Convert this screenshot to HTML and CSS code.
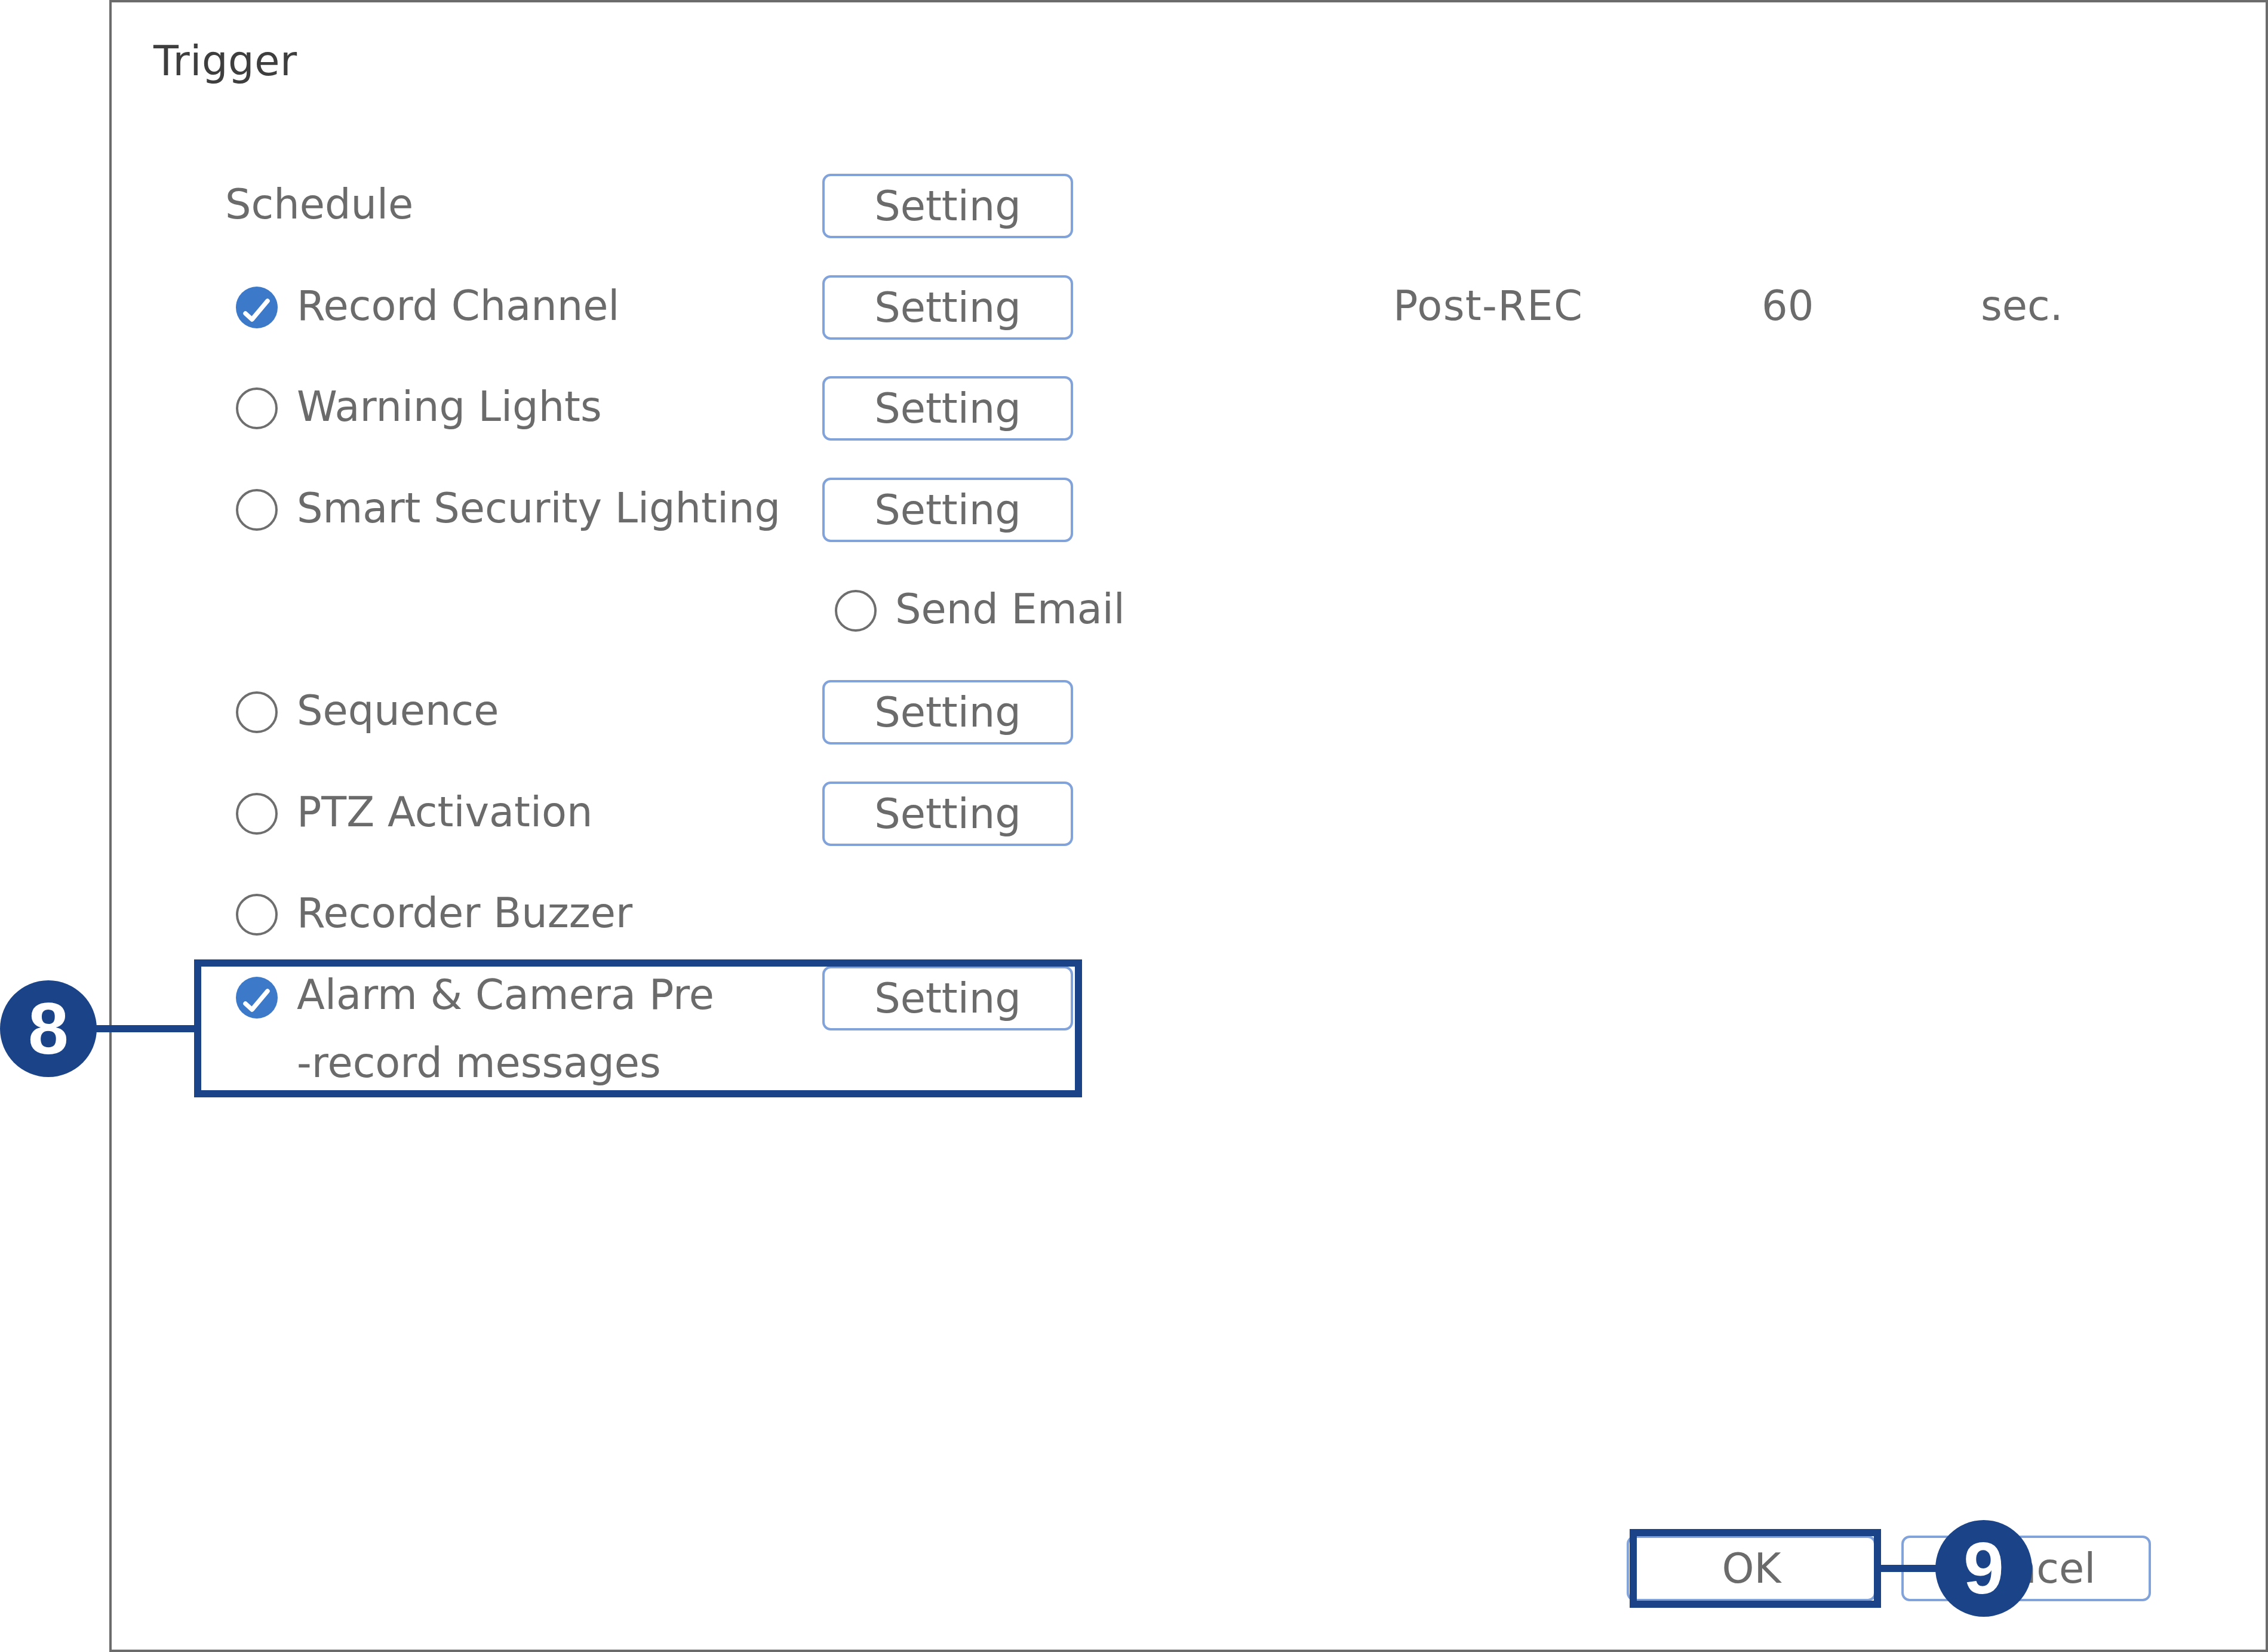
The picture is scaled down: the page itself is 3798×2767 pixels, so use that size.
FILE: index.html
```html
<!DOCTYPE html>
<html lang="en">
<head>
<meta charset="utf-8">
<title>Trigger</title>
<link rel="stylesheet" href="styles.css">
</head>
<body>
<div class="page">
  <div class="dialog">
    <h1 class="title">Trigger</h1>
    <div class="rows">
      <div class="row">
        <div class="label plain"><span class="txt">Schedule</span></div>
        <button class="btn">Setting</button>
      </div>
      <div class="row">
        <div class="label">
          <svg class="mark" viewBox="0 0 70 70"><circle cx="35" cy="35" r="35" fill="#3d79c9"/><path d="M16 45 L27 55 L53 24" fill="none" stroke="#fff" stroke-width="7.5" stroke-linecap="round" stroke-linejoin="round"/></svg>
          <span class="txt">Record Channel</span>
        </div>
        <button class="btn">Setting</button>
        <span class="post txt">Post-REC</span>
        <span class="val txt">60</span>
        <span class="unit txt">sec.</span>
      </div>
      <div class="row">
        <div class="label">
          <svg class="mark" viewBox="0 0 70 70"><circle cx="35" cy="35" r="33" fill="#fff" stroke="#6e6e6e" stroke-width="4"/></svg>
          <span class="txt">Warning Lights</span>
        </div>
        <button class="btn">Setting</button>
      </div>
      <div class="row">
        <div class="label">
          <svg class="mark" viewBox="0 0 70 70"><circle cx="35" cy="35" r="33" fill="#fff" stroke="#6e6e6e" stroke-width="4"/></svg>
          <span class="txt">Smart Security Lighting</span>
        </div>
        <button class="btn">Setting</button>
      </div>
      <div class="row">
        <div class="label"></div>
        <div class="opt">
          <svg class="mark" viewBox="0 0 70 70"><circle cx="35" cy="35" r="33" fill="#fff" stroke="#6e6e6e" stroke-width="4"/></svg>
          <span class="txt">Send Email</span>
        </div>
      </div>
      <div class="row">
        <div class="label">
          <svg class="mark" viewBox="0 0 70 70"><circle cx="35" cy="35" r="33" fill="#fff" stroke="#6e6e6e" stroke-width="4"/></svg>
          <span class="txt">Sequence</span>
        </div>
        <button class="btn">Setting</button>
      </div>
      <div class="row">
        <div class="label">
          <svg class="mark" viewBox="0 0 70 70"><circle cx="35" cy="35" r="33" fill="#fff" stroke="#6e6e6e" stroke-width="4"/></svg>
          <span class="txt">PTZ Activation</span>
        </div>
        <button class="btn">Setting</button>
      </div>
      <div class="row">
        <div class="label">
          <svg class="mark" viewBox="0 0 70 70"><circle cx="35" cy="35" r="33" fill="#fff" stroke="#6e6e6e" stroke-width="4"/></svg>
          <span class="txt">Recorder Buzzer</span>
        </div>
      </div>
    </div>
    <div class="row row-tall">
      <div class="label top">
        <svg class="mark mark-top" viewBox="0 0 70 70"><circle cx="35" cy="35" r="35" fill="#3d79c9"/><path d="M16 45 L27 55 L53 24" fill="none" stroke="#fff" stroke-width="7.5" stroke-linecap="round" stroke-linejoin="round"/></svg>
        <span class="two-line">Alarm &amp; Camera Pre<br>-record messages</span>
      </div>
      <button class="btn btn-top">Setting</button>
    </div>
    <div class="footer">
      <button class="btn">OK</button>
      <button class="btn">Cancel</button>
    </div>
  </div>

  <div class="callout box8"></div>
  <div class="connector line8"></div>
  <div class="badge badge8">8</div>

  <div class="callout box9"></div>
  <div class="connector line9"></div>
  <div class="badge badge9">9</div>
</div>
</body>
</html>
```

FILE: styles.css
```css
* { box-sizing: border-box; }

html, body {
  margin: 0;
  padding: 0;
  background: #ffffff;
}

.page {
  position: relative;
  width: 3798px;
  height: 2767px;
  overflow: hidden;
  font-family: "DejaVu Sans", "Liberation Sans", sans-serif;
  font-size: 68.6px;
  line-height: 66px;
  color: #6b6b6b;
}

.dialog {
  margin-left: 183px;
  width: 3615px;
  height: 2767px;
  border: 4px solid #6c6c6c;
  display: flex;
  flex-direction: column;
}

.title {
  margin: 65px 0 0 70px;
  font-size: 68.6px;
  line-height: 66px;
  letter-spacing: 0.6px;
  font-weight: normal;
  color: #3e3e3e;
}

.rows {
  margin-top: 156px;
  padding-left: 190px;
  display: flex;
  flex-direction: column;
  gap: 61.6px;
}

.row {
  display: flex;
  align-items: center;
  height: 108px;
}

.txt {
  padding-bottom: 6px;
}

.row-tall {
  margin-top: 26px;
  padding-left: 190px;
  height: auto;
  align-items: flex-start;
}

.label {
  width: 1000px;
  flex: none;
  display: flex;
  align-items: center;
  gap: 32px;
  padding-left: 18px;
  white-space: nowrap;
}

.label.plain {
  padding-left: 0;
}

.label.top {
  align-items: flex-start;
}

.two-line {
  line-height: 114px;
  margin-top: -3px;
}

.mark {
  width: 70px;
  height: 70px;
  flex: none;
  display: block;
}

.mark-top {
  margin-top: 24px;
}

.opt {
  display: flex;
  align-items: center;
  gap: 31px;
  padding-left: 21px;
  white-space: nowrap;
}

.btn {
  flex: none;
  width: 420px;
  height: 108px;
  padding: 0;
  background: #ffffff;
  border: 4px solid #82a3da;
  border-radius: 14px;
  font-family: "DejaVu Sans", "Liberation Sans", sans-serif;
  font-size: 68.6px;
  line-height: 66px;
  color: #6b6b6b;
  text-align: center;
}

.btn-top {
  margin-top: 6px;
}

.post {
  margin-left: 536px;
  width: 617px;
  flex: none;
  white-space: nowrap;
  letter-spacing: 1.4px;
}

.val {
  width: 367px;
  flex: none;
}

.unit {
  flex: none;
}

.footer {
  margin-top: auto;
  display: flex;
  justify-content: flex-end;
  gap: 42px;
  padding-right: 192px;
  padding-bottom: 81px;
}

.footer .btn {
  width: 418px;
  height: 110px;
}

/* annotation overlays */
.callout {
  position: absolute;
  border: 12px solid #1b4488;
}

.box8 {
  left: 325px;
  top: 1607px;
  width: 1487px;
  height: 231px;
}

.box9 {
  left: 2729px;
  top: 2561px;
  width: 421px;
  height: 132px;
}

.connector {
  position: absolute;
  height: 12px;
  background: #1b4488;
}

.line8 {
  left: 150px;
  top: 1717px;
  width: 180px;
}

.line9 {
  left: 3145px;
  top: 2621px;
  width: 105px;
}

.badge {
  position: absolute;
  width: 162px;
  height: 162px;
  border-radius: 50%;
  background: #1b4488;
  color: #ffffff;
  font-family: "Liberation Sans", Arial, sans-serif;
  font-weight: bold;
  font-size: 122px;
  line-height: 162px;
  text-align: center;
}

.badge8 {
  left: 0;
  top: 1642px;
}

.badge9 {
  left: 3241px;
  top: 2546px;
}
```
